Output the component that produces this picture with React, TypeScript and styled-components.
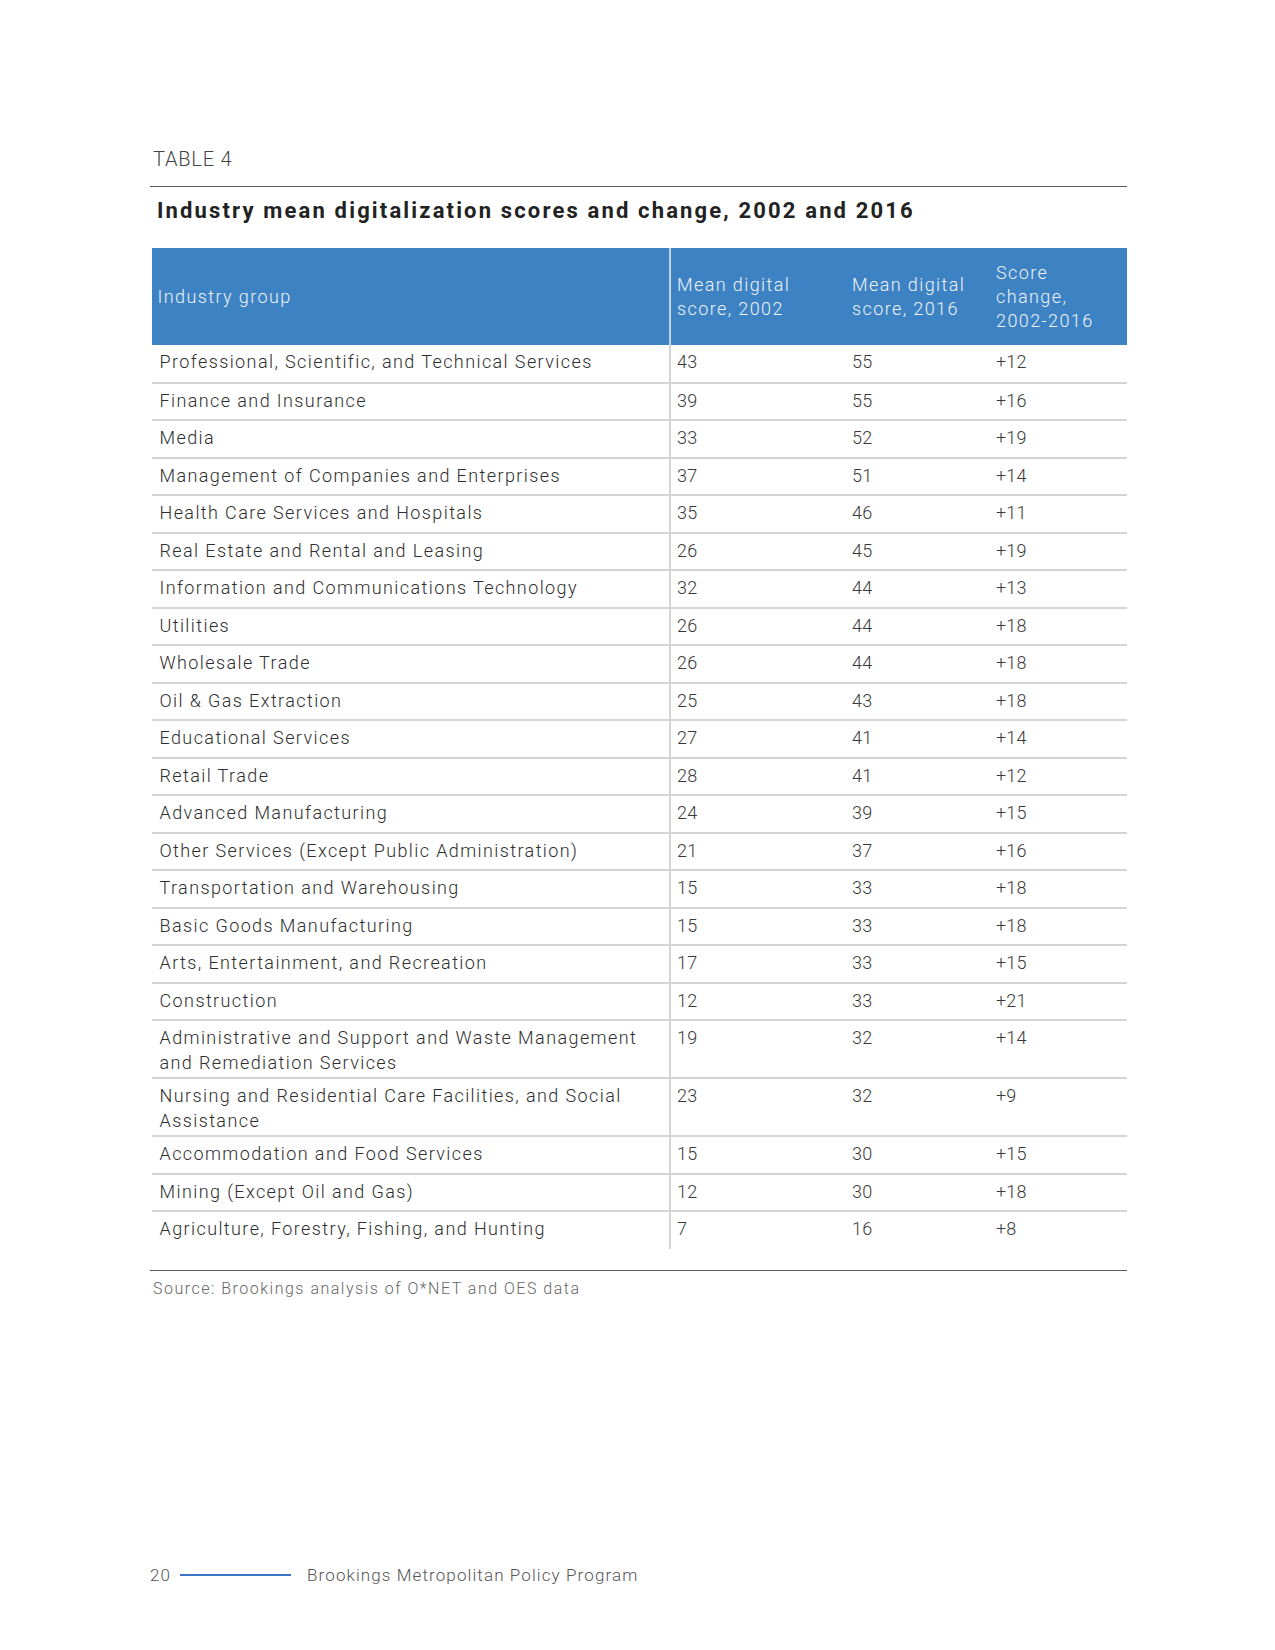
import * as React from 'react';
import styled, { createGlobalStyle } from "styled-components";

const GlobalStyle = createGlobalStyle`
  body {
    margin: 0;
    background: #ffffff;
    font-family: Roboto, "Liberation Sans", sans-serif;
    color: #333333;
  }
`;

const Page = styled.div`
  width: 1275px;
  height: 1650px;
  box-sizing: border-box;
  padding: 147px 0 0 150px;
  display: flex;
  flex-direction: column;
`;

const Content = styled.div`
  width: 977px;
  display: flex;
  flex-direction: column;
`;

const Label = styled.div`
  font-size: 20px;
  font-weight: 300;
  line-height: 24px;
  color: #444444;
  padding-left: 3px;
  letter-spacing: 0.8px;
`;

const Rule = styled.div<{ $top: number }>`
  height: 1px;
  background: #5a5a5a;
  margin-top: ${(p) => p.$top}px;
`;

const Title = styled.h2`
  margin: 11px 0 0 7px;
  font-size: 22px;
  font-weight: 700;
  line-height: 26px;
  color: #222222;
  letter-spacing: 2.15px;
  white-space: nowrap;
`;

const Table = styled.table`
  margin: 24px 0 0 1.5px;
  width: 975.5px;
  border-collapse: collapse;
  table-layout: fixed;
  font-size: 18px;
  font-weight: 300;
`;

const HeadCell = styled.th<{ $divider?: boolean }>`
  background: #3d82c3;
  color: #eef3fa;
  font-weight: 300;
  text-align: left;
  vertical-align: middle;
  height: 97px;
  padding: 0 6px;
  line-height: 24px;
  letter-spacing: 1.4px;
  border-right: ${(p) => (p.$divider ? "2px solid #c9ced4" : "none")};
  box-sizing: border-box;
`;

const Row = styled.tr<{ $last?: boolean }>`
  height: 37.5px;
  border-bottom: ${(p) => (p.$last ? "none" : "2px solid #d4d4d4")};
`;

const Cell = styled.td<{ $divider?: boolean; $num?: boolean }>`
  vertical-align: top;
  padding: 4px ${(p) => (p.$num ? "6px" : "8px")} 2px;
  line-height: 25px;
  color: ${(p) => (p.$num ? "#3a3a3a" : "#2e2e2e")};
  letter-spacing: ${(p) => (p.$num ? "0.2px" : "1.4px")};
  border-right: ${(p) => (p.$divider ? "2px solid #d4d4d4" : "none")};
`;

const Source = styled.div`
  margin-top: 8px;
  padding-left: 3px;
  font-size: 16px;
  font-weight: 300;
  line-height: 20px;
  color: #666666;
  letter-spacing: 1.5px;
`;

const Footer = styled.div`
  margin-top: auto;
  margin-bottom: 65px;
  display: flex;
  align-items: center;
  font-size: 17px;
  font-weight: 300;
  color: #555555;
  letter-spacing: 1.1px;
`;

const FooterLine = styled.span`
  width: 111px;
  height: 2px;
  background: #3b74c5;
  margin: 0 16px 0 9px;
`;

const rows: [string, number, number, string][] = [
  ["Professional, Scientific, and Technical Services", 43, 55, "+12"],
  ["Finance and Insurance", 39, 55, "+16"],
  ["Media", 33, 52, "+19"],
  ["Management of Companies and Enterprises", 37, 51, "+14"],
  ["Health Care Services and Hospitals", 35, 46, "+11"],
  ["Real Estate and Rental and Leasing", 26, 45, "+19"],
  ["Information and Communications Technology", 32, 44, "+13"],
  ["Utilities", 26, 44, "+18"],
  ["Wholesale Trade", 26, 44, "+18"],
  ["Oil & Gas Extraction", 25, 43, "+18"],
  ["Educational Services", 27, 41, "+14"],
  ["Retail Trade", 28, 41, "+12"],
  ["Advanced Manufacturing", 24, 39, "+15"],
  ["Other Services (Except Public Administration)", 21, 37, "+16"],
  ["Transportation and Warehousing", 15, 33, "+18"],
  ["Basic Goods Manufacturing", 15, 33, "+18"],
  ["Arts, Entertainment, and Recreation", 17, 33, "+15"],
  ["Construction", 12, 33, "+21"],
  ["Administrative and Support and Waste Management and Remediation Services", 19, 32, "+14"],
  ["Nursing and Residential Care Facilities, and Social Assistance", 23, 32, "+9"],
  ["Accommodation and Food Services", 15, 30, "+15"],
  ["Mining (Except Oil and Gas)", 12, 30, "+18"],
  ["Agriculture, Forestry, Fishing, and Hunting", 7, 16, "+8"],
];

const App = () => {
  return (
    <>
      <GlobalStyle />
      <Page>
        <Content>
          <Label>TABLE 4</Label>
          <Rule $top={15} />
          <Title>Industry mean digitalization scores and change, 2002 and 2016</Title>
          <Table>
            <colgroup>
              <col style={{ width: "518.5px" }} />
              <col style={{ width: "176px" }} />
              <col style={{ width: "144px" }} />
              <col style={{ width: "137px" }} />
            </colgroup>
            <thead>
              <tr>
                <HeadCell $divider>Industry group</HeadCell>
                <HeadCell>Mean digital<br />score, 2002</HeadCell>
                <HeadCell>Mean digital<br />score, 2016</HeadCell>
                <HeadCell>Score<br />change,<br />2002-2016</HeadCell>
              </tr>
            </thead>
            <tbody>
              {rows.map(([name, a, b, c], i) => (
                <Row key={name} $last={i === rows.length - 1}>
                  <Cell $divider>{name}</Cell>
                  <Cell $num>{a}</Cell>
                  <Cell $num>{b}</Cell>
                  <Cell $num>{c}</Cell>
                </Row>
              ))}
            </tbody>
          </Table>
          <Rule $top={21} />
          <Source>Source: Brookings analysis of O*NET and OES data</Source>
        </Content>
        <Footer>
          20
          <FooterLine />
          Brookings Metropolitan Policy Program
        </Footer>
      </Page>
    </>
  );
};

export default App;
